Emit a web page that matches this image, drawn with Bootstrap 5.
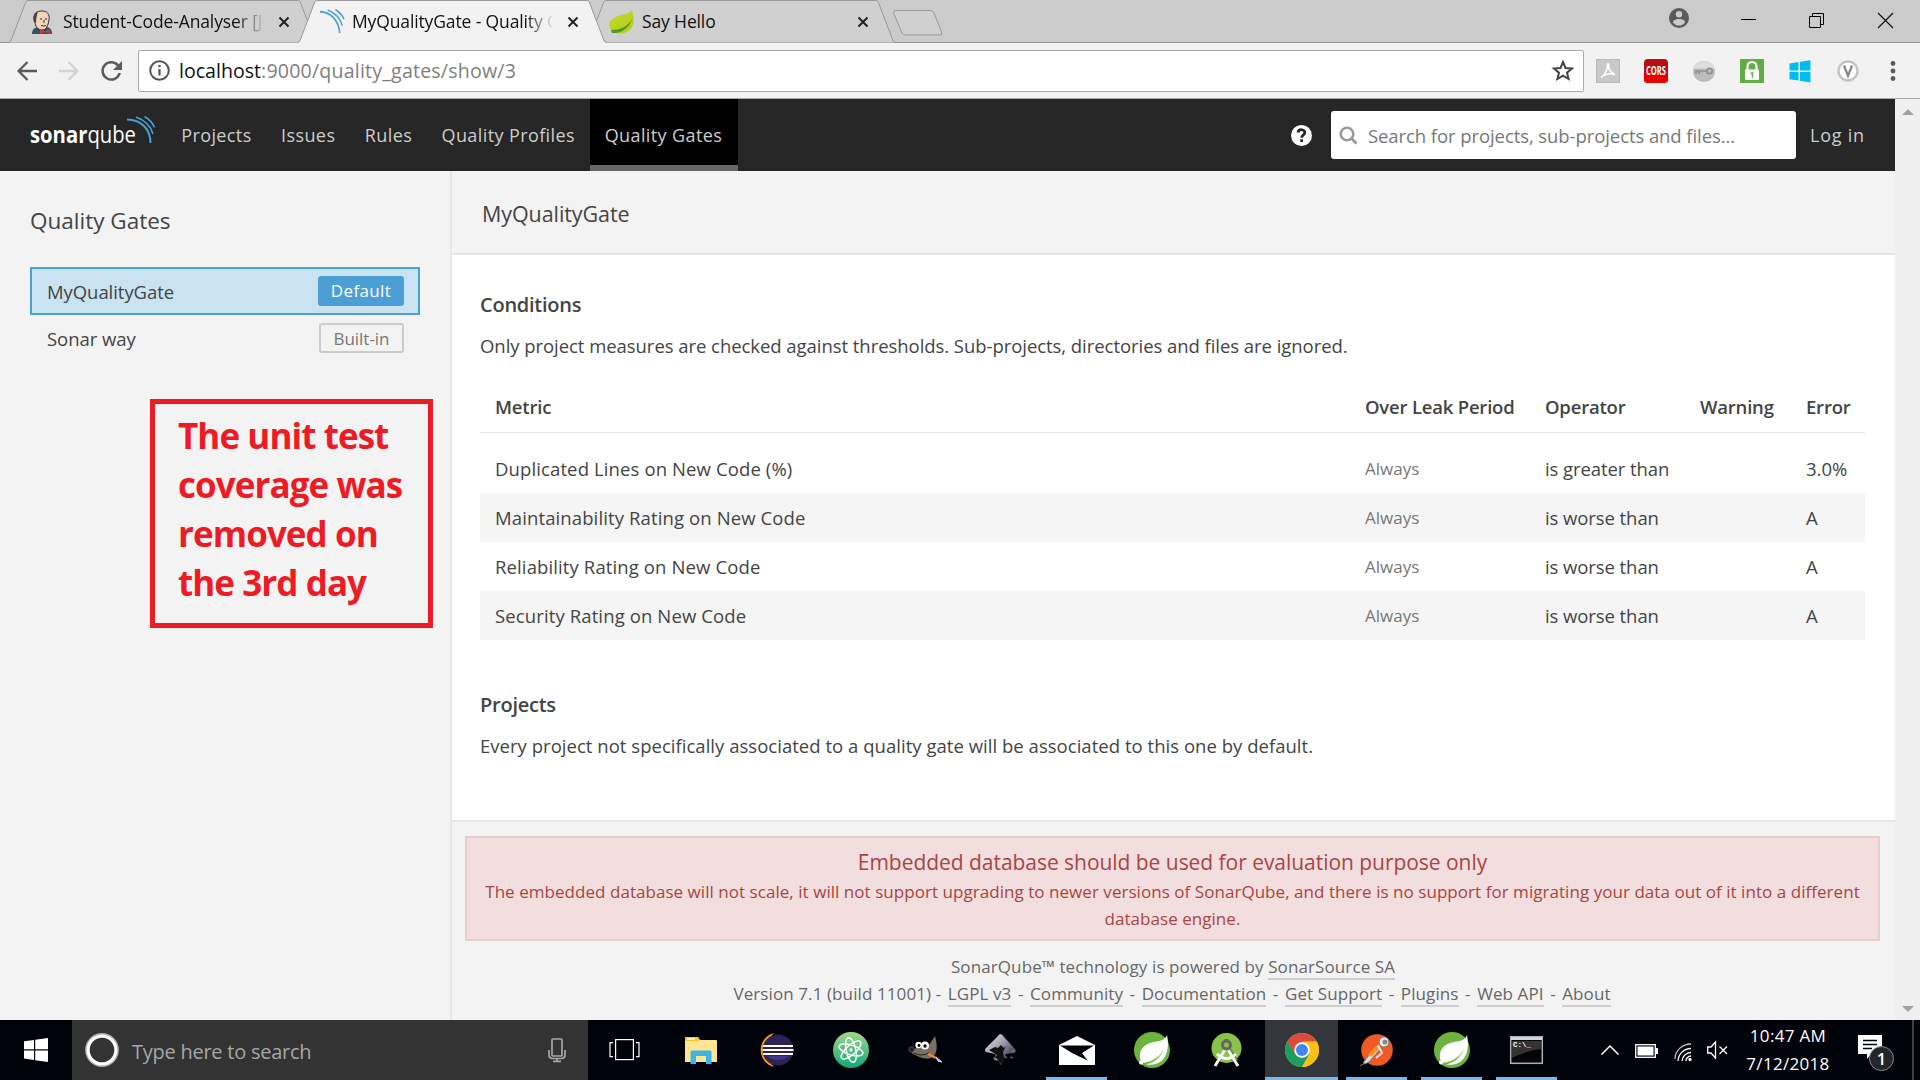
<!DOCTYPE html>
<html lang="en">
<head>
<meta charset="utf-8">
<title>MyQualityGate - Quality Gates</title>
<link href="https://cdn.jsdelivr.net/npm/bootstrap@5.3.0/dist/css/bootstrap.min.css" rel="stylesheet">
<style>
body{width:1920px;height:1080px;overflow:hidden;font-family:"Open Sans","Noto Sans",sans-serif;font-size:18.5px;color:#444;background:#f3f3f3}
svg{display:block;flex:none;overflow:visible}
/* browser chrome */
.tabstrip{height:43px;background:#cbcbcb;border-bottom:1px solid #999;padding-left:9px;flex:none}
.tab{width:309px;height:43px;margin-right:-20px;padding-left:22px;flex:none;font-size:17.5px;letter-spacing:-.13px;color:#111}
.tab.on{z-index:2}
.tab-shape{position:absolute;left:0;top:0}
.tab-label{position:relative;width:206px;margin-left:10px;margin-right:1px;white-space:nowrap;overflow:hidden;line-height:43px}
.tab-fade{-webkit-mask-image:linear-gradient(90deg,#000 84%,transparent 98%);mask-image:linear-gradient(90deg,#000 84%,transparent 98%)}
.tab-icon,.tab-x{position:relative}
.tab-x{margin-top:1px}
.toolbar{height:56px;background:#f2f2f2;border-bottom:1px solid #aaa;flex:none}
.omni{width:1446px;height:42px;margin-left:16px;background:#fff;border:1px solid #aaa;border-radius:2px;padding:0 9px 0 10px}
.url{font-size:19.6px;letter-spacing:.19px;color:#808080;margin-left:9px;line-height:40px}
.url b{font-weight:400;color:#111;letter-spacing:0}
/* application header */
.topnav{height:72px;background:#262626;color:#ccc;flex:none;padding-left:30px}
.topnav .nav-link{padding:0 14.700px;line-height:73px;font-size:18px;letter-spacing:.4px;color:#ccc;border-radius:0}
.topnav .nav-link.active{background:#000;border-bottom:6px solid #666;height:72px;padding:0 15.500px 0 15px}
.find{width:465px;height:48px;background:#fff;border-radius:3px;color:#777;padding-left:8px;margin-left:19px}
.find span{margin-left:10px;padding-top:1px;letter-spacing:-.08px}
.login{font-size:18px;letter-spacing:.75px;width:99px;padding:1px 0 0 14px}
/* side list */
.side{width:452px;border-right:2px solid #e6e6e6;padding:34px 30px 0;flex:none}
.side h1{font-size:22.5px;line-height:32px;margin-bottom:30px;font-weight:400}
.gate{height:48px;width:390px;padding:0 14px 0 15px;border:2px solid transparent;letter-spacing:-.06px;background:transparent;color:#444}
.gate.chosen{background:#cae3f2;border-color:#4b9fd5}
.gate-name{padding-top:2px}
.tagx{height:30px;border-radius:3px;font-size:17px;text-align:center;line-height:29px}
.tag-default{width:86px;background:#4b9fd5;color:#fff;letter-spacing:.36px}
.tag-builtin{width:85px;border:2px solid #ccc;color:#777;line-height:28px;letter-spacing:-.04px;margin-bottom:2px}
.callout{left:150px;top:399px;width:283px;height:229px;border:5px solid #ed1c24;color:#ed1c24;font-weight:700;font-size:35px;line-height:49px;letter-spacing:-.93px;padding:7px 0 0 23px;white-space:nowrap}
/* content */
.gate-title{height:84px;border-bottom:2px solid #e6e6e6;padding:27px 0 0 30px;font-size:21.5px;line-height:32px;letter-spacing:-.08px;margin:0;font-weight:400}
.sheet{background:#fff;height:567px;border-bottom:2px solid #e6e6e6;padding:35px 30px 0 28px}
.sheet h3{font-size:20px;line-height:30px;font-weight:600;letter-spacing:-.25px;margin:0 0 11px}
.sheet p{line-height:30px;margin:0 0 21px;white-space:nowrap}
.cond{width:1385px;table-layout:fixed;margin:0 0 50px;color:#444;--bs-table-bg:transparent}
.cond th,.cond td{height:49px;line-height:49px;padding:0 15px;border:0;white-space:nowrap;color:#444}
.cond th{font-weight:600;letter-spacing:-.2px}
.cond thead th{border-bottom:1px solid #e6e6e6;height:50px;line-height:47px;padding-bottom:2px}
.cond tbody::before{content:"";display:table-row;height:12px}
.cond .alt td{background:#f5f5f5}
.cond td:first-child{letter-spacing:.12px}
.cond td:nth-child(3){letter-spacing:-.08px}
.cond td.dim{font-size:17px;color:#777}
.evalbox{margin:14px 15px 0 13px;height:105px;border:2px solid #ebccd1;background:#f2dede;color:#a94442;text-align:center;padding:9px 0 0;border-radius:0}
.evalbox h4{font-size:21px;line-height:30px;margin:0 0 1px;font-weight:400;letter-spacing:-.04px}
.evalbox p{font-size:17px;line-height:27px;letter-spacing:.045px;margin:0;white-space:nowrap}
.foot{margin-top:12px;font-size:17px;line-height:27px;color:#666;letter-spacing:.1px;padding-right:1px}
.foot a{color:#444;text-decoration:none;border-bottom:2px solid #cfcfcf}
.foot .links a{margin:0 2px}
.scroller{width:25px;background:#f0f0f0;flex:none;padding:10px 0 8px}
/* taskbar */
.taskbar{height:60px;background:#00030a;flex:none;color:#fff}
.startbtn{width:72px}
.ask{width:516px;background:#333;color:#a6a6a6;font-size:20px;letter-spacing:-.25px;padding:0 22px 0 13px}
.app{width:75px;padding-bottom:0}
.app.run::after{content:"";position:absolute;left:7px;right:7px;bottom:0;height:3px;background:#76b9ed}
.app.front{background:#33373b}
.app.front::after{left:0;right:0}
.clock{font-size:17px;letter-spacing:.31px;line-height:28px;width:96px}
</style>
<script src="https://cdn.jsdelivr.net/npm/bootstrap@5.3.0/dist/js/bootstrap.bundle.min.js"></script>
</head>
<body class="d-flex flex-column">
<svg width="0" height="0" class="position-absolute">
<defs>
<linearGradient id="leafg" x1="0" y1="0" x2="1" y2="1"><stop offset="0" stop-color="#c4d92e"/><stop offset="1" stop-color="#b6cc18"/></linearGradient>
<linearGradient id="atomg" x1="0" y1="0" x2="0" y2="1"><stop offset="0" stop-color="#a2d78c"/><stop offset="1" stop-color="#10a778"/></linearGradient>
<linearGradient id="inkg" x1="0" y1="0" x2="1" y2="1"><stop offset="0" stop-color="#eee"/><stop offset=".45" stop-color="#99a"/><stop offset=".7" stop-color="#556"/><stop offset="1" stop-color="#dde"/></linearGradient>
<symbol id="spring" viewBox="0 0 36 36"><circle cx="18" cy="18" r="18" fill="#6db33f"/><path d="M33 3C31 8 27 9 20 10C9 12 5 18 6 27C8 32 15 34 22 32C32 29 36 17 33 3Z" fill="#fff"/><path d="M6 31C15 31 25 27 30 17C27 25 20 32 8 33Z" fill="#6db33f"/><circle cx="7" cy="30.500" r="2" fill="#fff"/></symbol>
<symbol id="xmark" viewBox="0 0 12 12"><path d="M1.500 1.500L10.500 10.500M10.500 1.500L1.500 10.500" stroke="#222" stroke-width="2"/></symbol>
</defs>
</svg>

<div class="tabstrip d-flex">
  <div class="tab position-relative d-flex align-items-center">
    <svg class="tab-shape" width="309" height="43"><path d="M0 42.500C2 42 2 40 3 38L16 4C17 1 18 .5 20 .5H288C291 .5 291 1 292 4L305 38C306 41 306 42 309 42.500" fill="#d0d0d0" stroke="#999"/></svg>
    <svg class="tab-icon" width="22" height="24" viewBox="0 0 22 24"><path d="M1 24C1 19 4 17 8 17H15C19 17 21 20 21 24Z" fill="#33516b"/><path d="M3 8C3 3 6 1 11 1S19 4 18 10S15 20 11 20S4 16 4 12Z" fill="#f0d6b7" stroke="#333" stroke-width="1"/><path d="M3 12C1 6 4 2 7 1.500C6 5 5 8 5 13Z" fill="#444"/><path d="M9 9h2M14 9h2M10 15.500q2 1 5 0M13 10v3" stroke="#333" fill="none"/><path d="M9 19l5 2.500L19 19v5l-5-2L9 24Z" fill="#d33833"/></svg>
    <div class="tab-label tab-fade">Student-Code-Analyser [Jenkins]</div>
    <svg class="tab-x ms-2" width="12" height="12"><use href="#xmark"/></svg>
  </div>
  <div class="tab on position-relative d-flex align-items-center">
    <svg class="tab-shape" width="309" height="43"><path d="M0 43V42.500C2 42 2 40 3 38L16 4C17 1 18 .5 20 .5H288C291 .5 291 1 292 4L305 38C306 41 306 42 309 42.500V43Z" fill="#f2f2f2"/><path d="M0 42.500C2 42 2 40 3 38L16 4C17 1 18 .5 20 .5H288C291 .5 291 1 292 4L305 38C306 41 306 42 309 42.500" fill="none" stroke="#999"/></svg>
    <svg class="tab-icon" width="24" height="25" viewBox="0 0 28 27" preserveAspectRatio="none" fill="none" stroke="#4b9fd5"><path d="M0 3C12 3 22 12 23 26" stroke-width="2"/><path d="M9 1C17 4 24 10 26 18M18 .5C22 3 26 6 28 11" stroke-width="1.700"/></svg>
    <div class="tab-label tab-fade" style="margin-left:8px">MyQualityGate - Quality Gates</div>
    <svg class="tab-x ms-2" width="12" height="12"><use href="#xmark"/></svg>
  </div>
  <div class="tab position-relative d-flex align-items-center">
    <svg class="tab-shape" width="309" height="43"><path d="M0 42.500C2 42 2 40 3 38L16 4C17 1 18 .5 20 .5H288C291 .5 291 1 292 4L305 38C306 41 306 42 309 42.500" fill="#d0d0d0" stroke="#999"/></svg>
    <svg class="tab-icon" width="25" height="24" viewBox="0 0 25 24"><path d="M23 0C20 4 15 4 9 6C0 9-2 15 2 20C7 25 16 24 21 20C26 15 25 7 23 0Z" fill="url(#leafg)"/><path d="M2 20C10 20 19 17 23 9C21 17 13 24 3 23Z" fill="#4c9a2a"/></svg>
    <div class="tab-label" style="margin-left:8px">Say Hello</div>
    <svg class="tab-x ms-2" width="12" height="12"><use href="#xmark"/></svg>
  </div>
  <svg class="ms-3" width="51" height="43"><path d="M4.500 10.500H38Q41 10.500 42 13L49.500 32Q50.500 35 47.500 35H14Q11 35 10 33L1.500 13Q1 10.500 4.500 10.500Z" fill="#d0d0d0" stroke="#999"/></svg>
  <div class="ms-auto d-flex" style="padding-right:27px">
    <svg width="20" height="20" viewBox="0 0 20 20" style="margin-top:8px"><circle cx="10" cy="10" r="10" fill="#5a5a5a"/><circle cx="10" cy="6.300" r="3.200" fill="#cbcbcb"/><path d="M4 14.500C4 12 7 11 10 11s6 1 6 3.500C14 17 12 17.500 10 17.500S6 17 4 14.500Z" fill="#cbcbcb"/></svg>
    <svg width="15" height="30" style="margin-left:52px"><path d="M0 19.500H15" stroke="#000"/></svg>
    <svg width="15" height="30" style="margin-left:53px"><path d="M.5 16.500H11.500V27.500H.5ZM3.500 16V13.500H14.500V24.500H12" fill="none" stroke="#000"/></svg>
    <svg width="15" height="30" style="margin-left:54px"><path d="M0 13L15 28M15 13L0 28" stroke="#111" stroke-width="1.200"/></svg>
  </div>
</div>

<div class="toolbar d-flex align-items-center">
  <svg width="20" height="20" viewBox="0 0 20 20" style="margin-left:17px" fill="none" stroke="#5a5a5a" stroke-width="2.300"><path d="M20 10H2M10.500 1L1.600 10l8.900 9"/></svg>
  <svg width="20" height="20" viewBox="0 0 20 20" style="margin-left:22px" fill="none" stroke="#d3d3d3" stroke-width="2.300"><path d="M0 10H18M9.500 1l8.900 9-8.900 9"/></svg>
  <svg width="21" height="20" viewBox="0 0 21 20" style="margin-left:22px"><path d="M17.500 5A8.700 8.700 0 1 0 18.700 12" fill="none" stroke="#5a5a5a" stroke-width="2.500"/><path d="M21 0V9H12Z" fill="#5a5a5a"/></svg>
  <div class="omni d-flex align-items-center">
    <svg width="21" height="21" viewBox="0 0 21 21"><circle cx="10.500" cy="10.500" r="9.300" fill="none" stroke="#555" stroke-width="2"/><path d="M10.500 9v6.500M10.500 5v2.300" stroke="#555" stroke-width="2.200"/></svg>
    <div class="url"><b>localhost</b>:9000/quality_gates/show/3</div>
    <svg class="ms-auto" width="22" height="21" viewBox="0 0 22 21"><path d="M11 2l2.500 6 6.500.5-5 4.200 1.600 6.300L11 15.600 5.400 19 7 12.700 2 8.500l6.500-.5Z" fill="none" stroke="#444" stroke-width="2"/></svg>
  </div>
  <div class="d-flex align-items-center" style="margin-left:12px;gap:24px">
    <svg width="24" height="24"><rect x=".5" y=".5" width="23" height="23" fill="#c9c9c9" stroke="#bbb"/><path d="M5 18.500C9 16 12 10 11.500 5.500Q12 4 12.500 5.500C12 10 15 14 19 15.500C14 14 9 15 5 18.500Z" fill="none" stroke="#fff" stroke-width="1.600"/></svg>
    <svg width="24" height="24"><rect width="24" height="24" rx="4" fill="#b80f12"/><path d="M0 13H24V20Q24 24 20 24H4Q0 24 0 20Z" fill="#e60000"/><text x="2" y="16" font-family="Open Sans" font-size="11.500" font-weight="700" fill="#fff" textLength="20" lengthAdjust="spacingAndGlyphs">CORS</text></svg>
    <svg width="24" height="24"><ellipse cx="12" cy="12.500" rx="11" ry="10.500" fill="#bdbdbd"/><path d="M1.500 9.500A11 10.500 0 0 1 22.500 9.500Z" fill="#dedede"/><g fill="none" stroke="#909090" stroke-width="1.700"><circle cx="17.500" cy="12" r="2.700"/><path d="M15 12H3M4 12v3M7 12v3"/></g></svg>
    <svg width="24" height="24"><rect width="24" height="24" fill="#64ad43"/><path d="M7.500 11V7.500a4.500 4.500 0 0 1 9 0V11" fill="none" stroke="#fff" stroke-width="2.200"/><rect x="5" y="10.500" width="14" height="10.500" rx="1" fill="#fff"/><text x="9.500" y="19" font-family="Open Sans" font-size="8.500" font-weight="700" fill="#64ad43">1</text></svg>
    <svg width="24" height="24"><path d="M1.500 4.500L10.500 3V11.500H1.500ZM12 2.800L22.500 1.200V11.500H12ZM1.500 13H10.500V21.500L1.500 20.200ZM12 13H22.500V23.500L12 21.800Z" fill="#00bcf2"/></svg>
    <svg width="24" height="24"><circle cx="12" cy="12" r="9.500" fill="#fff" stroke="#c4c4c4" stroke-width="2.500"/><path d="M8 6.500l4 10.500 4-10.500" fill="none" stroke="#888" stroke-width="2.200"/></svg>
    <svg width="6" height="22" fill="#5a5a5a" style="margin-left:6px"><circle cx="3" cy="3.500" r="2.400"/><circle cx="3" cy="11" r="2.400"/><circle cx="3" cy="18.500" r="2.400"/></svg>
  </div>
</div>

<div class="d-flex flex-grow-1" style="min-height:0">
  <div class="flex-grow-1 d-flex flex-column">
    <nav class="topnav d-flex align-items-center">
      <svg width="126" height="40" viewBox="0 0 126 40"><text y="28" x="0" font-size="23" font-family="Open Sans" fill="#fff" textLength="106" lengthAdjust="spacingAndGlyphs"><tspan font-weight="700">sonar</tspan>qube</text><g fill="none" stroke="#4b9fd5"><path d="M97 4.500C111 4.500 120.500 14 120.500 28" stroke-width="2"/><path d="M106 2C114 5 121 11 123 19M114.500 1.500C119 4 122.500 8 124.500 12.500" stroke-width="1.600"/></g></svg>
      <div class="nav flex-nowrap" style="margin-left:10.500px">
        <a class="nav-link">Projects</a><a class="nav-link">Issues</a><a class="nav-link">Rules</a><a class="nav-link">Quality Profiles</a><a class="nav-link active">Quality Gates</a>
      </div>
      <svg class="ms-auto" width="21" height="21" viewBox="0 0 21 21"><circle cx="10.500" cy="10.500" r="10.500" fill="#fff"/><path d="M7 7.500C7.500 3.500 14 4 13.800 7.800C13.600 10 10.700 10 10.600 12.800" fill="none" stroke="#262626" stroke-width="2.700"/><rect x="9.200" y="14.300" width="2.800" height="2.800" fill="#262626"/></svg>
      <div class="find d-flex align-items-center">
        <svg width="19" height="19" viewBox="0 0 19 19" fill="none" stroke="#999"><circle cx="8" cy="8" r="6.300" stroke-width="2.600"/><path d="M12.500 12.500l5 5" stroke-width="3"/></svg>
        <span>Search for projects, sub-projects and files...</span>
      </div>
      <div class="login">Log in</div>
    </nav>
    <div class="d-flex flex-grow-1">
      <aside class="side">
        <h1>Quality Gates</h1>
        <div class="list-group list-group-flush">
          <a class="gate chosen d-flex align-items-center justify-content-between text-decoration-none"><span class="gate-name">MyQualityGate</span><span class="tagx tag-default">Default</span></a>
          <a class="gate d-flex align-items-center justify-content-between text-decoration-none"><span>Sonar way</span><span class="tagx tag-builtin">Built-in</span></a>
        </div>
      </aside>
      <main class="flex-grow-1">
        <h2 class="gate-title">MyQualityGate</h2>
        <section class="sheet">
          <h3>Conditions</h3>
          <p style="letter-spacing:-.05px">Only project measures are checked against thresholds. Sub-projects, directories and files are ignored.</p>
          <table class="table cond">
            <colgroup><col style="width:870px"><col style="width:180px"><col style="width:155px"><col style="width:106px"><col style="width:74px"></colgroup>
            <thead><tr><th>Metric</th><th>Over Leak Period</th><th>Operator</th><th>Warning</th><th>Error</th></tr></thead>
            <tbody>
              <tr><td>Duplicated Lines on New Code (%)</td><td class="dim">Always</td><td>is greater than</td><td></td><td>3.0%</td></tr>
              <tr class="alt"><td>Maintainability Rating on New Code</td><td class="dim">Always</td><td>is worse than</td><td></td><td>A</td></tr>
              <tr><td>Reliability Rating on New Code</td><td class="dim">Always</td><td>is worse than</td><td></td><td>A</td></tr>
              <tr class="alt"><td>Security Rating on New Code</td><td class="dim">Always</td><td>is worse than</td><td></td><td>A</td></tr>
            </tbody>
          </table>
          <h3>Projects</h3>
          <p style="letter-spacing:.03px">Every project not specifically associated to a quality gate will be associated to this one by default.</p>
        </section>
        <div class="evalbox">
          <h4>Embedded database should be used for evaluation purpose only</h4>
          <p>The embedded database will not scale, it will not support upgrading to newer versions of SonarQube, and there is no support for migrating your data out of it into a different<br>database engine.</p>
        </div>
        <footer class="foot text-center">
          <div>SonarQube™ technology is powered by <a>SonarSource SA</a></div>
          <div class="links">Version 7.1 (build 11001) - <a>LGPL v3</a> - <a>Community</a> - <a>Documentation</a> - <a>Get Support</a> - <a>Plugins</a> - <a>Web API</a> - <a>About</a></div>
        </footer>
      </main>
    </div>
  </div>
  <div class="scroller d-flex flex-column justify-content-between align-items-center">
    <svg width="12" height="6"><path d="M0 6L6 0L12 6Z" fill="#a3a3a3"/></svg>
    <svg width="12" height="6"><path d="M0 0H12L6 6Z" fill="#a3a3a3"/></svg>
  </div>
</div>

<div class="callout position-absolute">The unit test<br>coverage was<br>removed on<br>the 3rd day</div>

<div class="taskbar d-flex">
  <div class="startbtn d-flex align-items-center justify-content-center"><svg width="24" height="24"><path d="M0 3.300L10 2V11.200H0ZM11.200 1.800L24 0V11.200H11.200ZM0 12.400H10V22L0 20.600ZM11.200 12.400H24V24L11.200 22.200Z" fill="#fff"/></svg></div>
  <div class="ask d-flex align-items-center">
    <svg width="34" height="34"><circle cx="17" cy="17" r="14.600" fill="none" stroke="#aaa" stroke-width="4.600"/><circle cx="17" cy="17" r="14" fill="none" stroke="#fff" stroke-width="3"/></svg>
    <span style="margin-left:13px;padding-top:4px">Type here to search</span>
    <svg class="ms-auto" width="18" height="24" fill="none" stroke="#a6a6a6" stroke-width="1.700"><rect x="4" y="1" width="10" height="17" rx="1"/><path d="M1 12V17Q1 20 4 20.500H14Q17 20 17 17V12M9 20.500V23.500M5 23.300H13"/></svg>
  </div>
  <div class="app d-flex align-items-center justify-content-center" style="padding-right:2px"><svg width="31" height="22" fill="none" stroke="#fff" stroke-width="1.200"><rect x="6.600" y=".6" width="17.800" height="20"/><path d="M4 3.600H1V17.600H4M27 3.600H30V17.600H27"/></svg></div>
  <div class="app d-flex align-items-center justify-content-center"><svg width="32" height="28"><path d="M0 2Q0 1 1 1H13L15 4H31Q32 4 32 5V26H0Z" fill="#ffe593"/><path d="M0 2Q0 1 1 1H13L14.500 5H0Z" fill="#fcc220"/><path d="M2 3h8" stroke="#fff" stroke-width="1.500"/><path d="M5.500 28V16Q5.500 14.500 7 14.500H25Q26.500 14.500 26.500 16V28H21V20H11V28Z" fill="#3db4e7"/></svg></div>
  <div class="app d-flex align-items-center justify-content-center"><svg width="36" height="34"><path d="M16 0A17.500 17.500 0 0 0 16 34A23 23 0 0 1 16 0Z" fill="#f7941e"/><circle cx="20" cy="17" r="15.500" fill="#2c2255"/><path d="M9 23H31Q27 27 20 27T9 23Z" fill="#443485"/><path d="M5 13H35M4.500 17H35.500M5 21H35" stroke="#fff" stroke-width="2"/></svg></div>
  <div class="app d-flex align-items-center justify-content-center"><svg width="36" height="36"><circle cx="18" cy="18" r="18" fill="url(#atomg)"/><g fill="none" stroke="#fff" stroke-width="1.400"><ellipse cx="18" cy="18" rx="4.800" ry="12.500" transform="rotate(-12 18 18)"/><ellipse cx="18" cy="18" rx="4.800" ry="12.500" transform="rotate(48 18 18)"/><ellipse cx="18" cy="18" rx="4.800" ry="12.500" transform="rotate(108 18 18)"/></g><circle cx="18" cy="18" r="1.700" fill="#fff"/></svg></div>
  <div class="app d-flex align-items-center justify-content-center"><svg width="34" height="28"><path d="M1 12C5 15 9 12 10 6L14 9H20L26 0C28 8 29 14 25 20C20 25 10 22 3 17Z" fill="#7a7062"/><circle cx="2.500" cy="13.500" r="2.800" fill="#222" stroke="#666" stroke-width=".7"/><circle cx="9.500" cy="9" r="3.200" fill="#fff"/><circle cx="16" cy="9.500" r="4" fill="#fff"/><circle cx="10" cy="9.500" r="1.400"/><circle cx="16" cy="10" r="1.700"/><path d="M5 17Q12 21 20 17" stroke="#222" fill="none"/><path d="M19 18L27 22" stroke="#e8892b" stroke-width="2.500"/><path d="M27 21L33 26L29 25Z" fill="#bbb" stroke="#ddd"/></svg></div>
  <div class="app d-flex align-items-center justify-content-center"><svg width="33" height="34"><path d="M16.500 1Q18 1 20 4L31 16Q33 19 29 20L22 21Q20 22 23 24Q24 25 20 26L17 32L14 28L9 25Q13 24 11 21L2 19Q0 17 2 15L13 4Q15 1 16.500 1Z" fill="url(#inkg)"/><path d="M5 17L11 14L14 15L17 12L20 15L22 13L19 19L20 24L22 26L17 31L14 28L11 25L13 22L10 20Z" fill="#111"/><path d="M10 25.500L13.500 27" stroke="#99a" stroke-width="1.500"/><path d="M26 24l3 1" stroke="#556" stroke-width="1.500"/></svg></div>
  <div class="app run position-relative d-flex align-items-center justify-content-center" style="margin-left:1px"><svg width="36" height="29"><path d="M0 9L18 0L36 9V29H0Z" fill="#fff"/><path d="M1 9.500H35L23 17L28.500 24.500L13 17Z" fill="#00030a"/></svg></div>
  <div class="app d-flex align-items-center justify-content-center"><svg width="36" height="36"><use href="#spring"/></svg></div>
  <div class="app d-flex align-items-center justify-content-center"><svg width="31" height="36"><circle cx="15.500" cy="16" r="15" fill="#8bc34a"/><path d="M15.500 9L27 28L21 30Z" fill="#5f8f35"/><path d="M15 16L4 34M16 16L27 34" stroke="#f2f2f2" stroke-width="3"/><path d="M6 22Q15.500 31 25 22" fill="none" stroke="#fff" stroke-width="2.800"/><circle cx="15.500" cy="13" r="4" fill="#8bc34a" stroke="#666" stroke-width="3"/><path d="M15.500 7V10" stroke="#666" stroke-width="4"/></svg></div>
  <div class="app run front position-relative d-flex align-items-center justify-content-center" style="width:73px;margin:0 1px"><svg width="34" height="34"><circle cx="17" cy="17" r="17" fill="#fbc116"/><path d="M2.300 8.500A17 17 0 0 1 31.700 8.500L17 9.500L9.600 21.200Z" fill="#dd4b3e"/><path d="M2.300 8.500A17 17 0 0 0 17 34L24.400 21.200L10 21Z" fill="#1a9f5c"/><path d="M31.700 8.500H17V17L24.400 21.200L17 34A17 17 0 0 0 31.700 8.500Z" fill="#fbc116"/><circle cx="17" cy="17" r="7.700" fill="#fff"/><circle cx="17" cy="17" r="6" fill="#4285f4"/></svg></div>
  <div class="app run position-relative d-flex align-items-center justify-content-center"><svg width="33" height="34"><circle cx="17" cy="17" r="15.800" fill="#f15a24"/><path d="M0 33L5 30M3 30L6 26L17 12L21 15L9 29L5 31Z" fill="#ddd" stroke="#777" stroke-width="1"/><path d="M8 22L16 13L19 16L11 24Z" fill="#f7941e"/><path d="M18 12L22 20L16 25" fill="none" stroke="#ddd" stroke-width="2"/><circle cx="24" cy="9" r="5" fill="#eee" stroke="#777"/><circle cx="25" cy="9" r="2.500" fill="#888"/></svg></div>
  <div class="app run position-relative d-flex align-items-center justify-content-center"><svg width="36" height="36"><use href="#spring"/></svg></div>
  <div class="app run position-relative d-flex align-items-center justify-content-center"><svg width="33" height="28"><rect x=".7" y=".7" width="31.600" height="26.600" fill="#050505" stroke="#a9b0b8" stroke-width="1.500"/><path d="M1 1H32V4H1Z" fill="#cdd6de"/><path d="M2 22Q18 14 31 13V5H2Z" fill="#333"/><text x="3" y="11" font-family="Liberation Mono" font-size="7.500" font-weight="700" fill="#fff">C:\_</text></svg></div>
  <div class="d-flex align-items-center ms-auto">
    <svg width="18" height="10"><path d="M.5 9.500L9 1L17.500 9.500" fill="none" stroke="#fff" stroke-width="1.500"/></svg>
    <svg width="23" height="14" style="margin-left:16px;margin-top:2px"><rect x=".7" y=".7" width="19.600" height="12.600" fill="none" stroke="#fff" stroke-width="1.300"/><rect x="2.500" y="2.500" width="16" height="9" fill="#fff"/><rect x="21" y="4" width="2" height="6" fill="#fff"/></svg>
    <svg width="18" height="18" style="margin-left:16px;margin-top:3px" fill="none" stroke="#fff" stroke-width="1.300"><path d="M1 16A16 15 0 0 1 17 1" opacity=".75"/><path d="M4 18A13 13 0 0 1 17 5.500M8 18A9 9 0 0 1 17 9.500M12 18A5 5 0 0 1 17 13"/><circle cx="16" cy="16.500" r="1" fill="#fff"/></svg>
    <svg width="21" height="18" style="margin-left:15px" fill="none" stroke="#fff" stroke-width="1.300"><path d="M.7 6H4L8.500 1V17L4 12H.7ZM12.500 5.500L20 13M20 5.500L12.500 13"/></svg>
    <div class="clock text-center" style="margin:0 1px 0 12px;padding-bottom:1px">10:47 AM<br>7/12/2018</div>
    <svg width="36" height="37" style="margin-left:21px;margin-top:7px"><path d="M0 0H24V19H13L9 24V19H0Z" fill="#fff"/><path d="M5 5.500H19M5 9.500H19M5 13.500H14" stroke="#00030a" stroke-width="1.300"/><circle cx="23.500" cy="23.500" r="12" fill="#222529" stroke="#888"/><text x="23.500" y="29.500" text-anchor="middle" font-family="Open Sans" font-size="16.500" font-weight="600" fill="#fff">1</text></svg>
    <div style="width:26px;padding-left:18px"><svg width="2" height="60"><path d="M1 0V60" stroke="#555" stroke-width="1.500"/></svg></div>
  </div>
</div>
</body>
</html>
